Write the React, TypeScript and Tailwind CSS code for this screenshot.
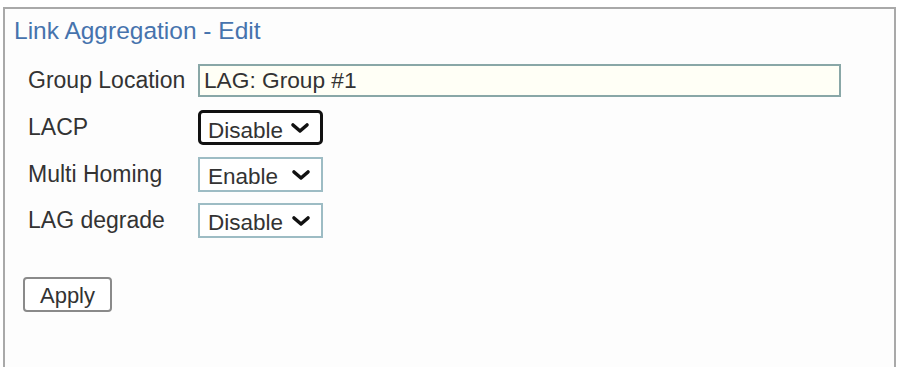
import React from "react";

function Chevron() {
  return (
    <svg
      width="20"
      height="13"
      viewBox="0 0 20 13"
      className="pointer-events-none absolute right-[10px] top-1/2 -translate-y-1/2"
    >
      <path
        d="M3 3.5 L10 9.5 L17 3.5"
        fill="none"
        stroke="#111"
        strokeWidth="3.6"
        strokeLinecap="round"
        strokeLinejoin="round"
      />
    </svg>
  );
}

function Select({
  value,
  options,
  focused,
}: {
  value: string;
  options: string[];
  focused?: boolean;
}) {
  return (
    <div
      className={
        focused
          ? "relative w-[125px] h-[35px] border-[3px] border-[#111] rounded-[5px] bg-white"
          : "relative w-[125px] h-[35px] border-2 border-[#9dbcc4] bg-white"
      }
    >
      <select
        defaultValue={value}
        className={
          focused
            ? "appearance-none w-full h-full bg-transparent pl-[7px] pb-[3px] text-[22.5px] leading-none text-[#333] outline-none"
            : "appearance-none w-full h-full bg-transparent pl-[8px] pb-[3px] text-[22.5px] leading-none text-[#333] outline-none"
        }
        style={{ fontFamily: '"Liberation Sans", Arial, sans-serif' }}
      >
        {options.map((o) => (
          <option key={o}>{o}</option>
        ))}
      </select>
      <Chevron />
    </div>
  );
}

export default function App() {
  const font = { fontFamily: '"Liberation Sans", Arial, sans-serif' };
  return (
    <div
      className="w-[898px] h-[367px] bg-white pt-[7px] pl-[3px] pr-[2px] overflow-hidden"
      style={font}
    >
      <div className="h-full border-2 border-b-0 border-[#a9a9a9] bg-[#fdfdfd]">
        <div className="mt-[8px] ml-[9px] text-[24.5px] leading-[28px] text-[#4673ad]">
          Link Aggregation - Edit
        </div>
        <div className="mt-[19px] pl-[23px] flex flex-col text-[23px] text-[#333]">
          <div className="flex items-center h-[33px]">
            <label className="w-[170px] whitespace-nowrap">Group Location</label>
            <input
              defaultValue="LAG: Group #1"
              className="w-[643px] h-[33px] border-2 border-[#89a7a7] bg-[#fffff6] px-[4px] text-[22.7px] text-[#333] outline-none"
              style={font}
            />
          </div>
          <div className="flex items-center mt-[13px] h-[35px]">
            <label className="w-[170px]">LACP</label>
            <Select value="Disable" options={["Disable", "Enable"]} focused />
          </div>
          <div className="flex items-center mt-[12px] h-[35px]">
            <label className="w-[170px]">Multi Homing</label>
            <Select value="Enable" options={["Disable", "Enable"]} />
          </div>
          <div className="flex items-center mt-[11px] h-[35px]">
            <label className="w-[170px]">LAG degrade</label>
            <Select value="Disable" options={["Disable", "Enable"]} />
          </div>
          <div className="mt-[39px] -ml-[5px]">
            <button
              className="w-[89px] h-[35px] border-2 border-[#8a8a8a] rounded-[4px] bg-white text-[22px] text-[#333]"
              style={font}
            >
              Apply
            </button>
          </div>
        </div>
      </div>
    </div>
  );
}
